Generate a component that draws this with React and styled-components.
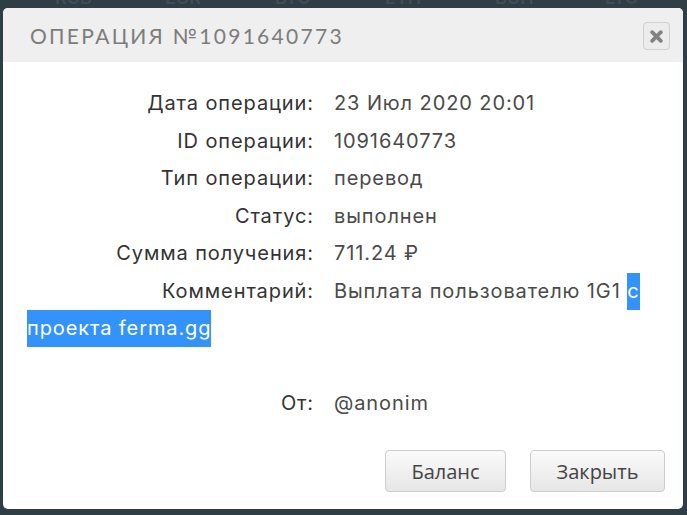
import React from 'react'
import styled, { createGlobalStyle } from 'styled-components'

const GlobalStyle = createGlobalStyle`
  html, body {
    margin: 0;
    padding: 0;
    background: #2f3d45;
  }
  body {
    font-family: "Inter", "Liberation Sans", sans-serif;
  }
`

const Page = styled.div`
  width: 687px;
  height: 515px;
  padding: 0 4px 0 3px;
  box-sizing: border-box;
  overflow: hidden;
`

// faint currency tabs of the page behind the dialog
const Tabs = styled.div`
  height: 7px;
  overflow: hidden;
  display: flex;
  align-items: flex-end;
  padding-left: 52px;
  gap: 70px;
`

const Tab = styled.span`
  font: 600 18px "Inter", sans-serif;
  color: #3f4e55;
  line-height: 12px;
  height: 12px;
  width: 40px;
  flex: none;
  margin-bottom: 3px;
`

const Dialog = styled.div`
  margin-top: 1px;
  height: 501px;
  background: #fff;
  border-radius: 5px;
  overflow: hidden;
  display: flex;
  flex-direction: column;
`

const Header = styled.div`
  height: 54px;
  background: #efefef;
  display: flex;
  align-items: center;
  justify-content: space-between;
  padding: 0 13px 0 27px;
`

const Title = styled.h2`
  margin: 0;
  font: 400 21px "Lato", sans-serif;
  letter-spacing: 2.3px;
  color: #7c7c7c;
  text-transform: uppercase;
`

const CloseButton = styled.button`
  width: 27px;
  height: 28px;
  border: 1px solid #cfcfcf;
  border-radius: 4px;
  background: #ececec;
  display: flex;
  align-items: center;
  justify-content: center;
  padding: 0;
  margin-top: 2px;
`

const Body = styled.div`
  flex: 1;
  padding: 23px 24px 0 24px;
  font-size: 20px;
  line-height: 37.5px;
  letter-spacing: 0.9px;
  color: #444;
`

const Row = styled.div`
  min-height: 37.5px;
`

const Label = styled.span`
  display: inline-block;
  width: 287px;
  text-align: right;
  margin-right: 20px;
  color: #333;
`

const Value = styled.span`
  color: #4a4a4a;
`

const Selected = styled.span`
  background: #3393fb;
  color: #fff;
  padding: 6px 0 7px;
`

const Footer = styled.div`
  display: flex;
  justify-content: flex-end;
  gap: 24px;
  padding: 0 18px 17px 0;
`

const Button = styled.button`
  height: 42px;
  width: ${p => p.w}px;
  border: 1px solid #cdcdcd;
  border-radius: 4px;
  background: linear-gradient(#fafafa, #e6e6e6);
  font: 400 20px "Open Sans", sans-serif;
  color: #444;
  padding: 0;
`

const rows = [
  ['Дата операции:', '23 Июл 2020 20:01'],
  ['ID операции:', '1091640773'],
  ['Тип операции:', 'перевод'],
  ['Статус:', 'выполнен'],
  ['Сумма получения:', '711.24 ₽'],
]

export default function App() {
  return (
    <Page>
      <GlobalStyle />
      <Tabs>
        {['RUB', 'EUR', 'BTC', 'ETH', 'BCH', 'LTC'].map(t => <Tab key={t}>{t}</Tab>)}
      </Tabs>
      <Dialog>
        <Header>
          <Title>Операция №1091640773</Title>
          <CloseButton>
            <svg width="13" height="13" viewBox="0 0 12 12">
              <path d="M2 2 L10 10 M10 2 L2 10" stroke="#828282" strokeWidth="3.4" strokeLinecap="round" />
            </svg>
          </CloseButton>
        </Header>
        <Body>
          {rows.map(([l, v]) => (
            <Row key={l}><Label>{l}</Label><Value>{v}</Value></Row>
          ))}
          <Row>
            <Label>Комментарий:</Label>
            <Value>Выплата пользователю 1G1 <Selected>с проекта ferma.gg</Selected></Value>
          </Row>
          <Row />
          <Row><Label>От:</Label><Value>@anonim</Value></Row>
        </Body>
        <Footer>
          <Button w={121}>Баланс</Button>
          <Button w={135}>Закрыть</Button>
        </Footer>
      </Dialog>
    </Page>
  )
}
